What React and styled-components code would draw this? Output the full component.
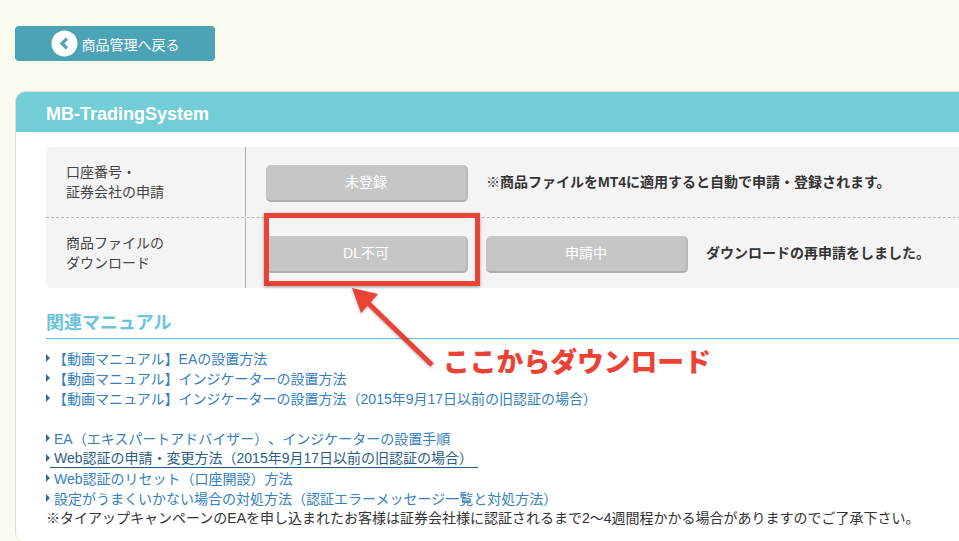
import React from "react";
import styled, { createGlobalStyle } from "styled-components";

const Global = createGlobalStyle`
  html, body { margin: 0; padding: 0; background: #f9fbef; }
  body { font-family: "Liberation Sans", "Noto Sans CJK JP", sans-serif; font-size: 14px; color: #333; text-spacing-trim: space-all; }
`;

const Page = styled.div`
  position: relative;
  width: 959px;
  height: 541px;
  overflow: hidden;
  padding: 26px 0 0 15px;
  box-sizing: border-box;
`;

const BackButton = styled.a`
  display: flex;
  align-items: center;
  justify-content: center;
  gap: 4px;
  width: 200px;
  height: 35px;
  box-sizing: border-box;
  border-radius: 4px;
  background: #4ba3b5;
  color: #fff;
  font-size: 14px;
`;

const BackIcon = styled.svg`
  width: 27px;
  height: 27px;
  flex: none;
`;

const Card = styled.section`
  width: 1000px;
  height: 452px;
  margin-top: 30px;
  box-sizing: border-box;
  background: #fff;
  border: 1px solid #dedfd9;
  border-radius: 10px;
  overflow: hidden;
`;

const CardHeader = styled.h2`
  margin: 0;
  height: 40px;
  padding-left: 30px;
  background: #72cdd6;
  color: #fff;
  font-size: 18px;
  font-weight: 700;
  line-height: 44px;
`;

const CardBody = styled.div`
  padding: 15px 0 0 30px;
`;

const InfoTable = styled.div`
  background: #f4f4f4;
  border-radius: 5px 0 0 5px;
  width: 960px;
`;

const Row = styled.div`
  display: grid;
  grid-template-columns: 200px 1fr;
  height: 70px;
  border-top: ${(p) => (p.$dashed ? "1px dashed #b9b9b9" : "0")};
`;

const RowLabel = styled.div`
  display: flex;
  align-items: center;
  padding-left: 20px;
  border-right: 1px solid #b0b0b0;
  line-height: 20px;
  font-size: 14px;
  color: #444;
`;

const RowContent = styled.div`
  display: flex;
  align-items: center;
  gap: 18px;
  padding-left: 20px;
`;

const StatusButton = styled.div`
  width: 202px;
  height: 37px;
  margin-top: 3px;
  box-sizing: border-box;
  border-radius: 5px;
  background: #c6c6c6;
  border-bottom: 2px solid #aeaeae;
  border-right: 2px solid #b8b8b8;
  color: #fff;
  font-size: 14px;
  text-align: center;
  line-height: 34px;
  flex: none;
`;

const Note = styled.span`
  margin-top: -2px;
  font-weight: 700;
  font-size: 14px;
  color: #333;
`;

const SectionTitle = styled.h3`
  margin: 21px 0 0;
  height: 29px;
  border-bottom: 1px solid #62c3dc;
  color: #69c4da;
  font-size: 18px;
  font-weight: 700;
  line-height: 29px;
`;

const LinkList = styled.ul`
  list-style: none;
  margin: ${(p) => p.$top}px 0 0;
  padding: 0;
`;

const LinkItem = styled.li`
  display: flex;
  align-items: center;
  height: 20px;
  color: #3580bd;
  font-size: 14px;
  white-space: nowrap;
`;

const Arrow = styled.i`
  flex: none;
  width: 0;
  height: 0;
  border-left: 4px solid #2b6f9e;
  border-top: 4px solid transparent;
  border-bottom: 4px solid transparent;
  margin-right: ${(p) => p.$gap}px;
`;

const LinkText = styled.span`
  ${(p) =>
    p.$hover &&
    `color:#2a5c86; border-bottom:1px solid #2a5c86; line-height:17px; margin-top:1px; padding-left:4px; margin-left:-4px; padding-right:5px;`}
`;

const Notice = styled.p`
  margin: 0;
  height: 20px;
  line-height: 20px;
  font-size: 14px;
  color: #333;
  white-space: nowrap;
`;

const Highlight = styled.div`
  position: absolute;
  left: 264px;
  top: 213px;
  width: 216px;
  height: 73px;
  box-sizing: border-box;
  border: 5px solid #ea4335;
  box-shadow: 0 1px 3px rgba(0, 0, 0, 0.35);
`;

const Pointer = styled.svg`
  position: absolute;
  left: 340px;
  top: 280px;
  width: 110px;
  height: 90px;
  overflow: visible;
`;

const Callout = styled.div`
  position: absolute;
  left: 443px;
  top: 342px;
  color: #ea4335;
  font-family: "Noto Sans CJK JP", sans-serif;
  font-size: 26.8px;
  font-weight: 900;
  line-height: 38px;
  white-space: nowrap;
`;

const firstLinks = [
  "【動画マニュアル】EAの設置方法",
  "【動画マニュアル】インジケーターの設置方法",
  "【動画マニュアル】インジケーターの設置方法（2015年9月17日以前の旧認証の場合）",
];

const secondLinks = [
  "EA（エキスパートアドバイザー）、インジケーターの設置手順",
  "Web認証の申請・変更方法（2015年9月17日以前の旧認証の場合）",
  "Web認証のリセット（口座開設）方法",
  "設定がうまくいかない場合の対処方法（認証エラーメッセージ一覧と対処方法）",
];

export default function App() {
  return (
    <>
      <Global />
      <Page>
        <BackButton>
          <BackIcon viewBox="0 0 28 28">
            <circle cx="14" cy="14" r="13.5" fill="#fff" />
            <path d="M16.5 9 L11.5 14 L16.5 19" fill="none" stroke="#4ba3b5" strokeWidth="3.4" />
          </BackIcon>
          商品管理へ戻る
        </BackButton>
        <Card>
          <CardHeader>MB-TradingSystem</CardHeader>
          <CardBody>
            <InfoTable>
              <Row>
                <RowLabel>
                  口座番号・
                  <br />
                  証券会社の申請
                </RowLabel>
                <RowContent>
                  <StatusButton>未登録</StatusButton>
                  <Note>※商品ファイルをMT4に適用すると自動で申請・登録されます。</Note>
                </RowContent>
              </Row>
              <Row $dashed>
                <RowLabel>
                  商品ファイルの
                  <br />
                  ダウンロード
                </RowLabel>
                <RowContent>
                  <StatusButton>DL不可</StatusButton>
                  <StatusButton>申請中</StatusButton>
                  <Note>ダウンロードの再申請をしました。</Note>
                </RowContent>
              </Row>
            </InfoTable>
            <SectionTitle>関連マニュアル</SectionTitle>
            <LinkList $top={9}>
              {firstLinks.map((t) => (
                <LinkItem key={t}>
                  <Arrow $gap={3} />
                  <LinkText>{t}</LinkText>
                </LinkItem>
              ))}
            </LinkList>
            <LinkList $top={20}>
              {secondLinks.map((t, i) => (
                <LinkItem key={t}>
                  <Arrow $gap={4} />
                  <LinkText $hover={i === 1}>{t}</LinkText>
                </LinkItem>
              ))}
            </LinkList>
            <Notice>※タイアップキャンペーンのEAを申し込まれたお客様は証券会社様に認証されるまで2〜4週間程かかる場合がありますのでご了承下さい。</Notice>
          </CardBody>
        </Card>
        <Highlight />
        <Pointer viewBox="0 0 110 90">
          <g style={{ filter: "drop-shadow(0 1px 1.5px rgba(0,0,0,.3))" }}>
            <line x1="92" y1="85" x2="26" y2="21" stroke="#ea4335" strokeWidth="5" />
            <polygon points="12,8 38,14 21,33" fill="#ea4335" />
          </g>
        </Pointer>
        <Callout>ここからダウンロード</Callout>
      </Page>
    </>
  );
}
